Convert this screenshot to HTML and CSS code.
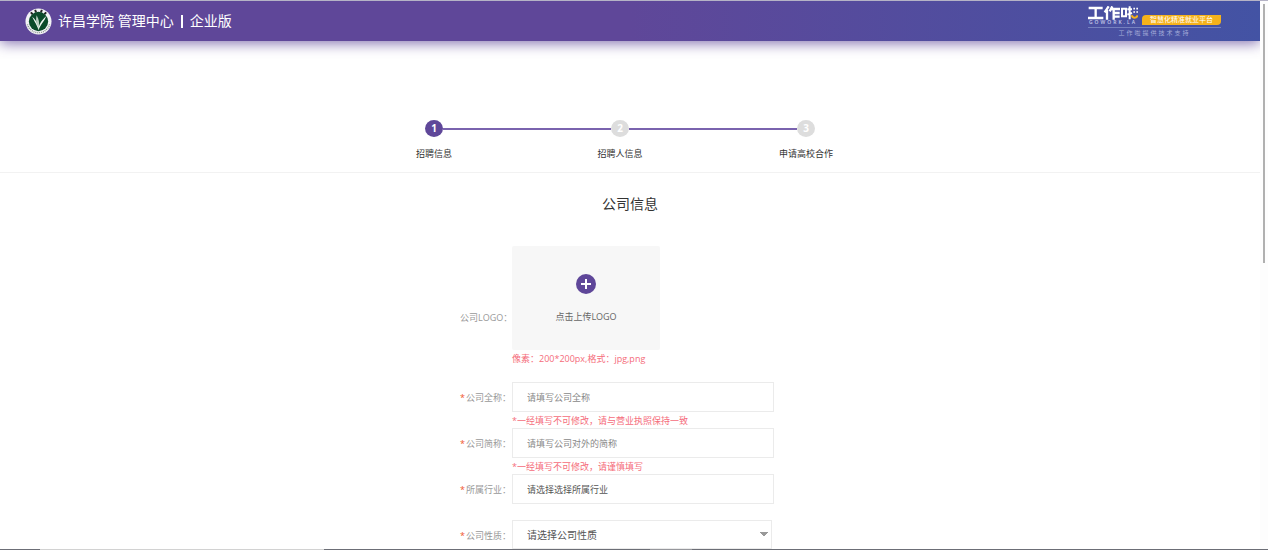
FILE: index.html
```html
<!DOCTYPE html>
<html lang="zh-CN">
<head>
  <meta charset="UTF-8">
  <meta name="viewport" content="width=device-width, initial-scale=1.0">
  <title>许昌学院 管理中心 | 企业版</title>
  <link rel="stylesheet" href="styles.css">
</head>
<body>
  <div class="window">
    <div class="page">
      <header class="header">
        <div class="brand">
          <svg class="school-logo" viewBox="0 0 56 56" aria-hidden="true">
            <circle cx="28" cy="28" r="27" fill="#f3f3f6"/>
            <path d="M12 9l4 4M21 4l2 5M33 9l2-5M40 13l4-4" stroke="#222" stroke-width="4"/>
            <path d="M5 34a24 24 0 0 0 46 0" fill="none" stroke="#8a958e" stroke-width="3" stroke-dasharray="2 2"/>
            <circle cx="28" cy="28" r="20" fill="#0b4a2a"/>
            <path d="M28 46C26 36 20 30 15 18c5 4 11 12 14 22z" fill="#f0f5f1"/>
            <path d="M28 40c-5-8-6-14-4-25 5 8 6 16 5 25z" fill="#b9cfc1"/>
            <path d="M28 46c0-12 6-20 16-29-3 9-9 14-14 24z" fill="#f0f5f1"/>
          </svg>
          <span class="brand-name">许昌学院 管理中心</span>
          <span class="brand-split"></span>
          <span class="brand-name">企业版</span>
        </div>
        <div class="partner">
          <div class="partner-top">
            <div class="partner-logo">
              <svg class="gowork" viewBox="0 0 150 42" aria-hidden="true">
                <g fill="none" stroke="#fff" stroke-width="7">
                  <path d="M2 6h42M23 6v29M0 36h46"/>
                  <path d="M62 1L50 19M57 12v29M73 1l-8 15M69 9h27M77 10v31M77 21h18M77 32h18"/>
                  <path d="M102 8h12v23h-12z" stroke-width="6"/>
                  <path d="M125 1v39M118 10h14M118 26l14-5" stroke-width="6"/>
                </g>
                <path d="M136 8h5M145 8h5M136 18h5M145 18h5" stroke="#fff" stroke-width="5"/>
                <path d="M131 28c3 10 15 10 18 0" fill="none" stroke="#f5b21b" stroke-width="6"/>
              </svg>
              <span class="partner-en">GOWORK.LA</span>
            </div>
            <span class="partner-tag">智慧化精准就业平台</span>
          </div>
          <span class="partner-support">工作啦提供技术支持</span>
        </div>
      </header>

      <nav class="steps-bar">
        <ol class="steps">
          <li class="step active">
            <span class="step-track"><b class="step-num">1</b></span>
            <span class="step-name">招聘信息</span>
          </li>
          <li class="step">
            <span class="step-track"><b class="step-num">2</b></span>
            <span class="step-name">招聘人信息</span>
          </li>
          <li class="step">
            <span class="step-track"><b class="step-num">3</b></span>
            <span class="step-name">申请高校合作</span>
          </li>
        </ol>
      </nav>

      <main class="main">
        <h1 class="title">公司信息</h1>
        <form class="form">
          <div class="row row-logo">
            <label class="label" for="logo-btn">公司LOGO：</label>
            <div class="field">
              <button class="upload" id="logo-btn" type="button">
                <svg class="upload-icon" viewBox="0 0 20 20" aria-hidden="true">
                  <circle cx="10" cy="10" r="10" fill="#5f4799"/>
                  <path d="M10 5v10M5 10h10" stroke="#fff" stroke-width="2"/>
                </svg>
                <span>点击上传LOGO</span>
              </button>
              <p class="tip">像素：200*200px,格式：jpg,png</p>
            </div>
          </div>
          <div class="row">
            <label class="label" for="full-name"><i>*</i>公司全称：</label>
            <div class="field">
              <input class="input" id="full-name" type="text" placeholder="请填写公司全称">
              <p class="tip">*一经填写不可修改，请与营业执照保持一致</p>
            </div>
          </div>
          <div class="row">
            <label class="label" for="short-name"><i>*</i>公司简称：</label>
            <div class="field">
              <input class="input" id="short-name" type="text" placeholder="请填写公司对外的简称">
              <p class="tip">*一经填写不可修改，请谨慎填写</p>
            </div>
          </div>
          <div class="row">
            <label class="label" for="industry"><i>*</i>所属行业：</label>
            <div class="field">
              <input class="input dark" id="industry" type="text" placeholder="请选择选择所属行业" readonly>
            </div>
          </div>
          <div class="row">
            <label class="label" for="nature"><i>*</i>公司性质：</label>
            <div class="field">
              <select class="input select" id="nature">
                <option>请选择公司性质</option>
              </select>
            </div>
          </div>
        </form>
      </main>
    </div>
    <div class="scrollbar"><div class="scrollbar-thumb"></div></div>
  </div>
  <div class="taskbar">
    <span class="taskbar-item"></span>
    <span class="taskbar-item small"></span>
  </div>
</body>
</html>
```

FILE: styles.css
```css
* {
  box-sizing: border-box;
}

body {
  margin: 0;
  height: 100vh;
  display: flex;
  flex-direction: column;
  overflow: hidden;
  font-family: "Open Sans", "Noto Sans CJK SC", sans-serif;
  font-size: 9px;
  color: #333;
  background: #fff;
  border-top: 1px solid #b5b3c6;
}

.window {
  flex: 1;
  min-height: 0;
  display: flex;
}

.page {
  flex: 1;
  overflow: hidden;
}

/* header */
.header {
  display: flex;
  justify-content: space-between;
  align-items: center;
  height: 40px;
  padding: 0 39px 0 25px;
  color: #fff;
  background: linear-gradient(90deg, #5f4799 0%, #5f4799 50%, #4353a4 100%);
  box-shadow: 0 2px 14px rgba(95, 71, 153, 0.8);
}

.brand {
  display: flex;
  align-items: center;
}

.school-logo {
  width: 27px;
  height: 27px;
  margin-right: 6px;
}

.brand-name {
  font-size: 14px;
  line-height: 20px;
}

.brand-split {
  width: 2px;
  height: 13px;
  margin: 0 7px;
  background: #fff;
}

.partner {
  display: flex;
  flex-direction: column;
  align-items: center;
  padding-top: 2px;
}

.partner-top {
  display: flex;
  align-items: flex-end;
  gap: 4px;
  padding-bottom: 2px;
  border-bottom: 1px solid #7580be;
}

.partner-logo {
  display: flex;
  flex-direction: column;
  align-items: center;
}

.gowork {
  width: 50px;
  height: 14px;
}

.partner-en {
  font-size: 5px;
  font-weight: 600;
  line-height: 5px;
  letter-spacing: 2px;
  color: #c5caea;
}

.partner-tag {
  padding: 0 8px;
  font-size: 7px;
  line-height: 10px;
  background: #f5b21b;
  border-radius: 4px 0 4px 0;
}

.partner-support {
  font-size: 6px;
  line-height: 10px;
  letter-spacing: 2px;
  color: #a3abd8;
}

/* steps */
.steps-bar {
  padding: 79px 20px 11px 0;
  border-bottom: 1px solid #f2f2f2;
}

.steps {
  display: flex;
  width: 558px;
  margin: 0 auto;
  padding: 0;
  list-style: none;
}

.step {
  flex: 1;
  text-align: center;
}

.step-track {
  display: flex;
  align-items: center;
}

.step-track::before,
.step-track::after {
  content: "";
  flex: 1;
  height: 2px;
  background: #7a63ae;
}

.step:first-child .step-track::before,
.step:last-child .step-track::after {
  background: none;
}

.step-num {
  width: 18px;
  height: 17px;
  border-radius: 50%;
  font-size: 10px;
  line-height: 17px;
  color: #fff;
  background: #ddd;
}

.active .step-num {
  background: #5f4799;
}

.step-name {
  display: block;
  margin-top: 10px;
  line-height: 14px;
}

/* form */
.title {
  margin: 0;
  padding: 21px 0 32px;
  font-size: 14px;
  font-weight: normal;
  line-height: 20px;
  text-align: center;
}

.form {
  width: 340px;
  margin: 0 auto;
}

.row {
  display: flex;
  align-items: flex-start;
  gap: 2px;
  height: 46px;
}

.row-logo {
  height: 136px;
}

.label {
  width: 50px;
  line-height: 31px;
  text-align: right;
  white-space: nowrap;
  color: #999;
}

.row-logo .label {
  padding-top: 56px;
}

.label i {
  margin-right: 1px;
  font-style: normal;
  color: #f0552b;
}

.field {
  width: 262px;
}

.upload {
  display: flex;
  flex-direction: column;
  align-items: center;
  gap: 16px;
  width: 148px;
  height: 104px;
  padding: 28px 0 0;
  border: 0;
  border-radius: 2px;
  font: inherit;
  line-height: 14px;
  color: #666;
  background: #f7f7f7;
}

.upload-icon {
  width: 20px;
  height: 20px;
}

.tip {
  margin: 0;
  padding-top: 2px;
  line-height: 14px;
  white-space: nowrap;
  color: #f56c7b;
}

.input {
  display: block;
  width: 100%;
  height: 30px;
  padding: 0 14px;
  border: 1px solid #ebebeb;
  border-radius: 0;
  font: inherit;
  color: #555;
  background: #fff;
}

.input::placeholder {
  color: #888;
}

.dark::placeholder {
  color: #555;
}

.select {
  width: 260px;
  height: 29px;
  font-size: 10px;
  appearance: none;
  background: #fff conic-gradient(from -45deg at 50% 100%, #999 90deg, transparent 0) no-repeat right 2px center / 10px 5px;
}

/* window edges */
.scrollbar {
  width: 8px;
  padding: 3px 1px 0 3px;
  background: #fdfdfd;
}

.scrollbar-thumb {
  width: 2px;
  height: 259px;
  background: #b0b0b0;
}

.taskbar {
  display: flex;
  gap: 326px;
  height: 1px;
  padding-left: 40px;
  background: #6c6e76;
}

.taskbar-item {
  width: 284px;
  height: 1px;
  background: #d2d2d2;
}

.small {
  width: 42px;
  background: #96979c;
}
```
